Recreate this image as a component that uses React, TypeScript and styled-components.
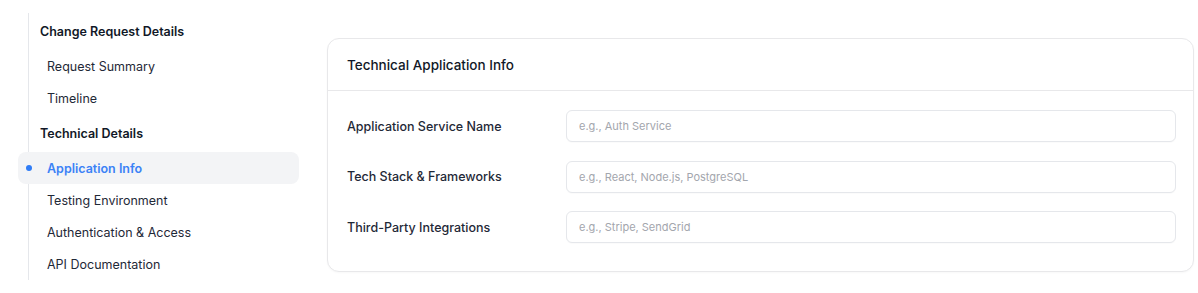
import styled, { createGlobalStyle } from "styled-components";

const GlobalStyle = createGlobalStyle`
  body {
    margin: 0;
    background: #ffffff;
    font-family: Inter, "Noto Sans", "Liberation Sans", sans-serif;
    color: #1f2937;
  }
`;

const NAV_SECTIONS = [
  {
    title: "Change Request Details",
    items: [{ name: "Request Summary" }, { name: "Timeline" }],
  },
  {
    title: "Technical Details",
    items: [
      { name: "Application Info", active: true },
      { name: "Testing Environment" },
      { name: "Authentication & Access" },
      { name: "API Documentation" },
    ],
  },
];

const FIELDS = [
  { label: "Application Service Name", placeholder: "e.g., Auth Service" },
  { label: "Tech Stack & Frameworks", placeholder: "e.g., React, Node.js, PostgreSQL" },
  { label: "Third-Party Integrations", placeholder: "e.g., Stripe, SendGrid" },
];

const PageWrapper = styled.div`
  display: flex;
  align-items: flex-start;
  padding: 13px 4px 0 18px;
  gap: 28px;
`;

const Sidebar = styled.nav`
  width: 281px;
  flex-shrink: 0;
  display: flex;
  flex-direction: column;
  padding-left: 10px;
  box-sizing: border-box;
`;

const SidebarTrack = styled.div`
  border-left: 1px solid #e5e7eb;
  padding-top: 2px;
  display: flex;
  flex-direction: column;
`;

const SectionTitle = styled.div<{ $spaced?: boolean }>`
  height: 32px;
  display: flex;
  align-items: center;
  padding-left: 11px;
  margin-top: ${(p) => (p.$spaced ? "3px" : "0")};
  margin-bottom: 3px;
  font-size: 12.5px;
  font-weight: 600;
  color: #111827;
`;

const NavItem = styled.div<{ $active?: boolean }>`
  position: relative;
  height: 32px;
  display: flex;
  align-items: center;
  margin-left: -11px;
  padding-left: 29px;
  border-radius: 8px;
  font-size: 12.5px;
  font-weight: ${(p) => (p.$active ? 600 : 400)};
  color: ${(p) => (p.$active ? "#3b82f6" : "#1f2937")};
  background: ${(p) => (p.$active ? "#f3f4f6" : "transparent")};

  &::before {
    content: "";
    display: ${(p) => (p.$active ? "block" : "none")};
    position: absolute;
    left: 8px;
    top: 13px;
    width: 6px;
    height: 6px;
    border-radius: 50%;
    background: #2f7cf6;
  }
`;

const Card = styled.section`
  flex: 1;
  margin-top: 25px;
  border: 1px solid #e8e8ea;
  border-radius: 12px;
  background: #ffffff;
  box-shadow: 0 1px 2px rgba(0, 0, 0, 0.03);
`;

const CardHeader = styled.div`
  height: 51px;
  display: flex;
  align-items: center;
  padding: 0 20px 0 19px;
  border-bottom: 1px solid #e8e8ea;
  font-size: 13.5px;
  font-weight: 500;
  color: #111827;
`;

const CardBody = styled.div`
  display: flex;
  flex-direction: column;
  gap: 18.5px;
  padding: 19px 17px 28px 19px;
`;

const FieldRow = styled.div`
  display: grid;
  grid-template-columns: 219px 1fr;
  align-items: center;
`;

const FieldLabel = styled.label`
  font-size: 12.5px;
  font-weight: 500;
  color: #1f2937;
`;

const TextInput = styled.input`
  height: 32px;
  box-sizing: border-box;
  border: 1px solid #e5e7eb;
  border-radius: 6px;
  padding: 0 12px;
  font-family: inherit;
  font-size: 11px;
  color: #111827;
  outline: none;
  box-shadow: 0 1px 1px rgba(0, 0, 0, 0.02);

  &::placeholder {
    color: #a3a6ad;
  }
`;

const App: React.FC = () => {
  return (
    <>
      <GlobalStyle />
      <PageWrapper>
        <Sidebar>
          <SidebarTrack>
            {NAV_SECTIONS.map((section, i) => (
              <div key={section.title}>
                <SectionTitle $spaced={i > 0}>{section.title}</SectionTitle>
                {section.items.map((item) => (
                  <NavItem key={item.name} $active={"active" in item && item.active}>
                    {item.name}
                  </NavItem>
                ))}
              </div>
            ))}
          </SidebarTrack>
        </Sidebar>
        <Card>
          <CardHeader>Technical Application Info</CardHeader>
          <CardBody>
            {FIELDS.map((field) => (
              <FieldRow key={field.label}>
                <FieldLabel>{field.label}</FieldLabel>
                <TextInput placeholder={field.placeholder} />
              </FieldRow>
            ))}
          </CardBody>
        </Card>
      </PageWrapper>
    </>
  );
};

export default App;
